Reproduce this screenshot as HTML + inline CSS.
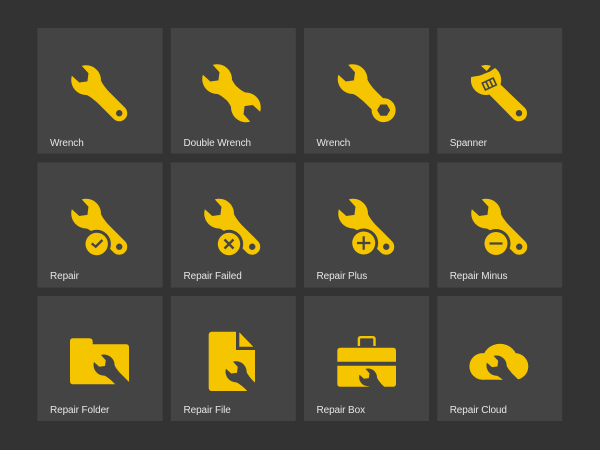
<!DOCTYPE html>
<html lang="en">
<head>
<meta charset="utf-8">
<title>Repair Icons</title>
<style>
html,body{margin:0;padding:0;background:#333;}
body{width:600px;height:450px;overflow:hidden;}
svg{display:block;}
text{font-family:"Liberation Sans",sans-serif;font-size:10px;fill:#e6e6e6;letter-spacing:-.1px;}
</style>
</head>
<body>
<svg width="600" height="450" viewBox="0 0 600 450" xmlns="http://www.w3.org/2000/svg">
<defs>
<path id="w" fill-rule="evenodd" d="M-13,-7 L-3,-6.5 L2,0 L-3,6.5 L-13,7 A15,15 0 0 0 11,10.2 C14,9 18,8.4 24,8 L47,8 A8,8 0 0 0 47,-8 L24,-8 C18,-8.4 14,-9 11,-10.2 A15,15 0 0 0 -13,-7 Z M47,-3.2 A3.2,3.2 0 1 0 47,3.2 A3.2,3.2 0 1 0 47,-3.2 Z"/>
<path id="h" d="M-13,-7 L-3,-6.5 L2,0 L-3,6.5 L-13,7 A15,15 0 0 0 11,10.2 C14,9 18,8.4 24,8 L24,-8 C18,-8.4 14,-9 11,-10.2 A15,15 0 0 0 -13,-7 Z"/>
<path id="d" d="M-13,-7 L-3,-6.5 L2,0 L-3,6.5 L-13,7 A15,15 0 0 0 11,10.2 C14,9 18,8.4 24,8 L62,8 L62,-8 L24,-8 C18,-8.4 14,-9 11,-10.2 A15,15 0 0 0 -13,-7 Z"/>
</defs>
<rect width="600" height="450" fill="#333"/>

<g fill="#444">
<rect x="37.5" y="28" width="125" height="125.5"/>
<rect x="170.8" y="28" width="125" height="125.5"/>
<rect x="304" y="28" width="125" height="125.5"/>
<rect x="437.2" y="28" width="125" height="125.5"/>
<rect x="37.5" y="162.5" width="125" height="125"/>
<rect x="170.8" y="162.5" width="125" height="125"/>
<rect x="304" y="162.5" width="125" height="125"/>
<rect x="437.2" y="162.5" width="125" height="125"/>
<rect x="37.5" y="296" width="125" height="125"/>
<rect x="170.8" y="296" width="125" height="125"/>
<rect x="304" y="296" width="125" height="125"/>
<rect x="437.2" y="296" width="125" height="125"/>
</g>

<g fill="#f5c500">
<!-- row 1 -->
<use href="#w" transform="translate(86,80) rotate(45)"/>
<use href="#h" transform="translate(217,79) rotate(45)"/>
<use href="#h" transform="translate(246,107.5) rotate(225)"/>

<use href="#h" transform="translate(352.5,79) rotate(45)"/>
<g transform="translate(352.5,79) rotate(45)">
<rect x="22" y="-8" width="16" height="16"/>
<circle cx="44" cy="0" r="12"/>
<polygon points="50.5,0 47.2,-5.6 40.8,-5.6 37.5,0 40.8,5.6 47.2,5.6" fill="#444" transform="rotate(-45 44 0)"/>
</g>

<path fill-rule="evenodd" d="M471.2,77 L480,75.5 L490,71.5 L495,68 A15,15 0 0 1 500.5,84.5 L524.9,107.9 A8,8 0 0 1 513.6,119.2 L489.4,94.6 A15,15 0 0 1 471.2,77 Z M519,110 A3.2,3.2 0 1 0 519,116.4 A3.2,3.2 0 1 0 519,110 Z"/>
<path d="M481,65.9 A15,15 0 0 1 491,65.9 L486.7,71 Z"/>
<g transform="translate(489.3,84) rotate(-25)">
<rect x="-6.8" y="-4.5" width="13.6" height="9" fill="#444"/>
<rect x="-5.2" y="-3" width="2.4" height="6"/>
<rect x="-1.2" y="-3" width="2.4" height="6"/>
<rect x="2.8" y="-3" width="2.4" height="6"/>
</g>

<!-- row 2 -->
<use href="#w" transform="translate(86,213.5) rotate(45)"/>
<circle cx="96.7" cy="244" r="14.2" fill="#444"/>
<circle cx="96.7" cy="244" r="11.2"/>
<polyline points="91.7,243.4 95.7,246.7 102.4,240" fill="none" stroke="#444" stroke-width="2.3"/>

<use href="#w" transform="translate(219,213.5) rotate(45)"/>
<circle cx="229" cy="244" r="14.2" fill="#444"/>
<circle cx="229" cy="244" r="11.2"/>
<path d="M224.5,239.5 L233.5,248.5 M233.5,239.5 L224.5,248.5" stroke="#444" stroke-width="2.3" fill="none"/>

<use href="#w" transform="translate(353,213.5) rotate(45)"/>
<circle cx="363.7" cy="243" r="14.5" fill="#444"/>
<circle cx="363.7" cy="243" r="11.5"/>
<path d="M357,243 H370.4 M363.7,236.3 V249.7" stroke="#444" stroke-width="2.2" fill="none"/>

<use href="#w" transform="translate(486,213.5) rotate(45)"/>
<circle cx="496" cy="243.5" r="14.5" fill="#444"/>
<circle cx="496" cy="243.5" r="11.5"/>
<path d="M489.5,243.5 H502.5" stroke="#444" stroke-width="2.2" fill="none"/>

<!-- row 3 -->
<path d="M73,338.3 H89 Q92.7,338.3 92.7,341.5 V344.3 H126 Q129,344.3 129,347.3 V381.3 Q129,384.3 126,384.3 H73 Q70,384.3 70,381.3 V341.3 Q70,338.3 73,338.3 Z"/>
<use href="#d" fill="#444" transform="translate(104,365) rotate(45) scale(.71)"/>

<path d="M212,331.7 H236 V350 H255 V391 H212 Q208.7,391 208.7,387.7 V335 Q208.7,331.7 212,331.7 Z"/>
<polygon points="239.3,332.3 253.3,346.7 239.3,346.7"/>
<use href="#d" fill="#444" transform="translate(236,371.7) rotate(45) scale(.71)"/>

<path d="M358.9,346 V339 Q358.9,337.2 360.7,337.2 H372.7 Q374.5,337.2 374.5,339 V346" fill="none" stroke="#f5c500" stroke-width="2.4"/>
<path d="M340.3,347.7 H393 Q396,347.7 396,350.7 V361.7 H337.3 V350.7 Q337.3,347.7 340.3,347.7 Z"/>
<path d="M337.3,365.7 H396 V383.7 Q396,386.7 393,386.7 H340.3 Q337.3,386.7 337.3,383.7 Z"/>
<use href="#d" fill="#444" transform="translate(368,377.3) rotate(45) scale(.6)"/>

<circle cx="482.7" cy="366.4" r="13.3"/>
<circle cx="500" cy="361.7" r="18"/>
<circle cx="515" cy="366.4" r="13.3"/>
<rect x="482.7" y="362" width="32" height="17.7"/>
<use href="#d" fill="#444" transform="translate(496.5,365.5) rotate(45) scale(.68)"/>
</g>

<text x="50" y="146">Wrench</text>
<text x="183.5" y="146">Double Wrench</text>
<text x="316.5" y="146">Wrench</text>
<text x="449.7" y="146">Spanner</text>
<text x="50" y="279">Repair</text>
<text x="183.5" y="279">Repair Failed</text>
<text x="316.5" y="279">Repair Plus</text>
<text x="449.7" y="279">Repair Minus</text>
<text x="50" y="413">Repair Folder</text>
<text x="183.5" y="413">Repair File</text>
<text x="316.5" y="413">Repair Box</text>
<text x="449.7" y="413">Repair Cloud</text>
</svg>
</body>
</html>
